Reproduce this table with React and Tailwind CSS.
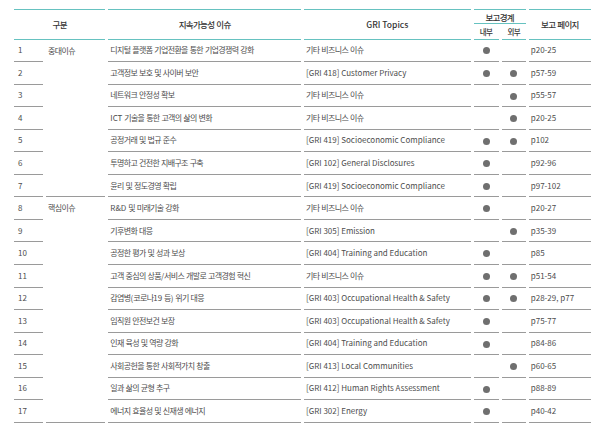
import React from 'react';

const rows = [
  [1, '디지털 플랫폼 기업전환을 통한 기업경쟁력 강화', '기타 비즈니스 이슈', true, false, 'p20-25'],
  [2, '고객정보 보호 및 사이버 보안', '[GRI 418] Customer Privacy', true, true, 'p57-59'],
  [3, '네트워크 안정성 확보', '기타 비즈니스 이슈', false, true, 'p55-57'],
  [4, 'ICT 기술을 통한 고객의 삶의 변화', '기타 비즈니스 이슈', false, true, 'p20-25'],
  [5, '공정거래 및 법규 준수', '[GRI 419] Socioeconomic Compliance', true, true, 'p102'],
  [6, '투명하고 건전한 지배구조 구축', '[GRI 102] General Disclosures', true, false, 'p92-96'],
  [7, '윤리 및 정도경영 확립', '[GRI 419] Socioeconomic Compliance', true, false, 'p97-102'],
  [8, 'R&D 및 미래기술 강화', '기타 비즈니스 이슈', true, false, 'p20-27'],
  [9, '기후변화 대응', '[GRI 305] Emission', false, true, 'p35-39'],
  [10, '공정한 평가 및 성과 보상', '[GRI 404] Training and Education', true, false, 'p85'],
  [11, '고객 중심의 상품/서비스 개발로 고객경험 혁신', '기타 비즈니스 이슈', true, true, 'p51-54'],
  [12, '감염병(코로나19 등) 위기 대응', '[GRI 403] Occupational Health & Safety', true, true, 'p28-29, p77'],
  [13, '임직원 안전보건 보장', '[GRI 403] Occupational Health & Safety', true, false, 'p75-77'],
  [14, '인재 육성 및 역량 강화', '[GRI 404] Training and Education', true, false, 'p84-86'],
  [15, '사회공헌을 통한 사회적가치 창출', '[GRI 413] Local Communities', false, true, 'p60-65'],
  [16, '일과 삶의 균형 추구', '[GRI 412] Human Rights Assessment', true, false, 'p88-89'],
  [17, '에너지 효율성 및 신재생 에너지', '[GRI 302] Energy', true, false, 'p40-42'],
];

// hangul runs are a bit tighter than the latin text in the source
const Ko = ({ text }) =>
  text.split(/([가-힣]+)/).map((part, i) =>
    /[가-힣]/.test(part) ? <span key={i} className="tracking-[-0.08em]">{part}</span> : part
  );

const Dot = () => <span className="inline-block w-[7px] h-[7px] rounded-full bg-[#6f6f6f] align-middle" />;

const td = 'border-b border-[#9a9a9a] p-0 h-[22.55px] align-middle';
const th = 'border-t border-b border-[#66c2c0] p-0 font-medium text-[#333] text-[8.5px]';

export default function App() {
  return (
    <div className="bg-white w-[600px] h-[425px] overflow-hidden pt-[9px] pl-[11px]" style={{ fontFamily: '"Noto Sans CJK KR", "Noto Sans", sans-serif' }}>
      <table className="table-fixed border-separate border-spacing-x-[3px] border-spacing-y-0 w-[583px] text-[8px] leading-none text-[#4d4d4d]">
        <colgroup>
          <col className="w-[29px]" />
          <col className="w-[59px]" />
          <col className="w-[192px]" />
          <col className="w-[166px]" />
          <col className="w-[25px]" />
          <col className="w-[24px]" />
          <col className="w-[62px]" />
        </colgroup>
        <thead>
          <tr className="h-[15px]">
            <th colSpan={2} rowSpan={2} className={th}><Ko text="구분" /></th>
            <th rowSpan={2} className={th}><Ko text="지속가능성 이슈" /></th>
            <th rowSpan={2} className={th}>GRI Topics</th>
            <th colSpan={2} className={th + ' pt-[1px]'}><Ko text="보고경계" /></th>
            <th rowSpan={2} className={th}><Ko text="보고 페이지" /></th>
          </tr>
          <tr className="h-[15.5px]">
            <th className="border-b border-[#66c2c0] p-0 font-medium text-[#333] text-[7.5px]"><Ko text="내부" /></th>
            <th className="border-b border-[#66c2c0] p-0 font-medium text-[#333] text-[7.5px]"><Ko text="외부" /></th>
          </tr>
        </thead>
        <tbody>
          {rows.map(([n, issue, gri, inner, outer, page]) => (
            <tr key={n}>
              <td className={td + ' pl-[4px]'}>{n}</td>
              {n === 1 && (
                <td rowSpan={7} className="border-b border-[#9a9a9a] p-0 align-top pt-[7px] pl-[2px]"><Ko text="중대이슈" /></td>
              )}
              {n === 8 && (
                <td rowSpan={10} className="border-b border-[#9a9a9a] p-0 align-top pt-[7px] pl-[2px]"><Ko text="핵심이슈" /></td>
              )}
              <td className={td + ' pl-[2px] whitespace-nowrap'}><Ko text={issue} /></td>
              <td className={td + ' pl-[2px] whitespace-nowrap'}><Ko text={gri} /></td>
              <td className={td + ' text-center'}>{inner && <Dot />}</td>
              <td className={td + ' text-center'}>{outer && <Dot />}</td>
              <td className={td + ' pl-[2px] whitespace-nowrap'}>{page}</td>
            </tr>
          ))}
        </tbody>
      </table>
    </div>
  );
}
